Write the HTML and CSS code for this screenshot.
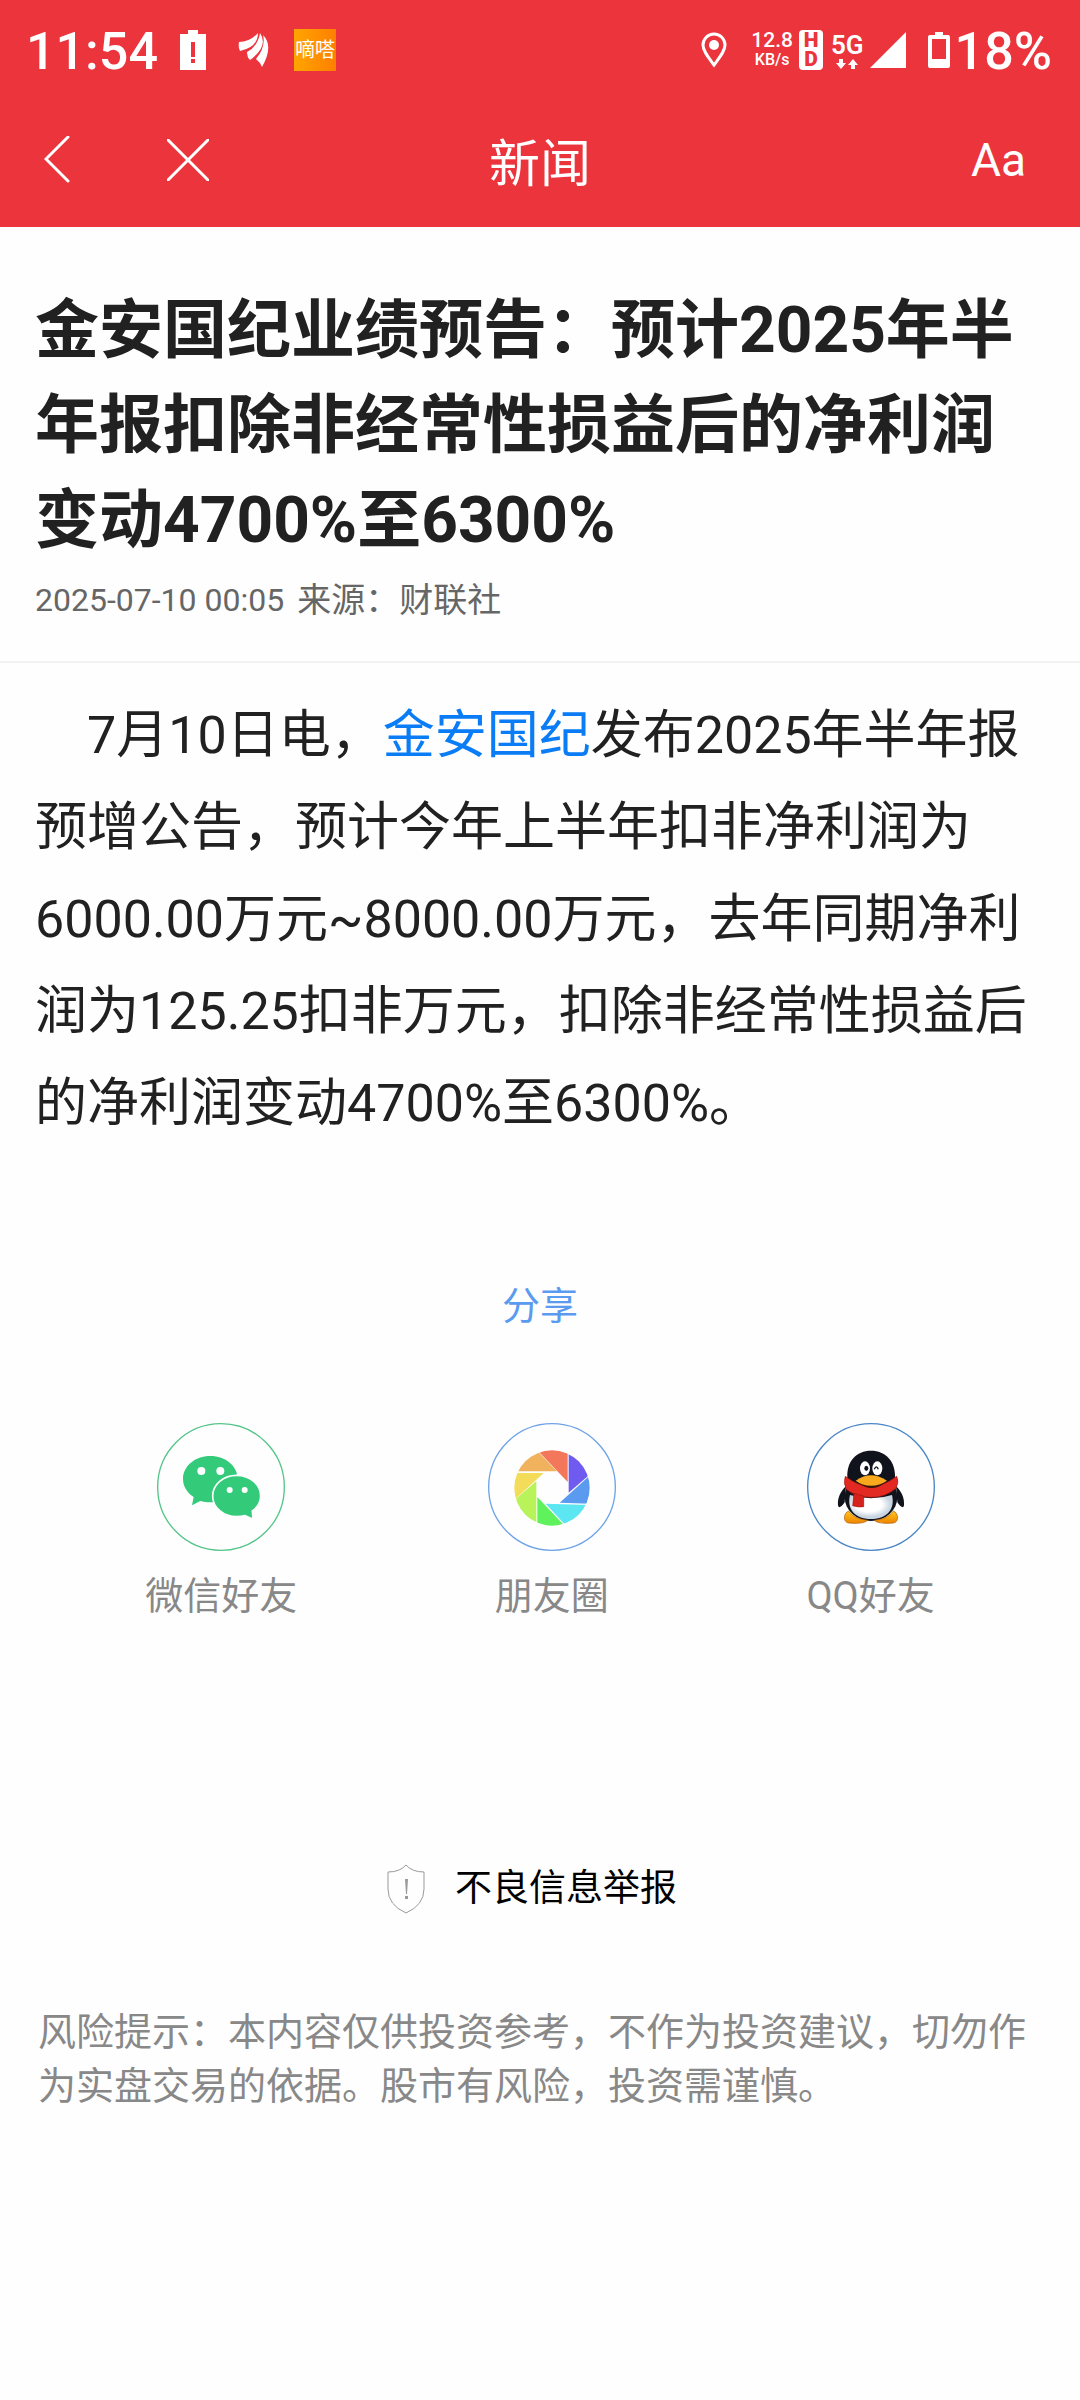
FILE: index.html
```html
<!DOCTYPE html>
<html lang="zh-CN">
<head>
    <meta charset="UTF-8">
    <meta name="viewport" content="width=device-width, initial-scale=1.0">
    <title>新闻</title>
    <link rel="stylesheet" href="styles.css">
</head>
<body>
    <header class="top">
        <div class="status-bar">
            <div class="status-left">
                <span class="status-text">11:54</span>
                <svg class="icon-alert" width="26" height="40" viewBox="0 0 26 40">
                    <path fill="#fff" fill-rule="evenodd" d="M8 0h10v4h8v36H0V4h8zM11 12v15h4V12zM11 29v4h4v-4z"/>
                </svg>
                <svg class="icon-wing" width="32" height="36" viewBox="0 0 32 36">
                    <path fill="#fff" d="M1 10Q12 10 20 1Q20 15 2 19Q0 15 1 10zM9 20Q20 14 22 1Q31 14 12 28Q9 25 9 20zM18 27Q28 15 25 3Q36 14 24 35Q22 30 18 27z"/>
                </svg>
                <span class="app-badge">嘀嗒</span>
            </div>
            <div class="status-right">
                <svg class="icon-pin" width="26" height="36" viewBox="0 0 26 36">
                    <path fill="none" stroke="#fff" stroke-width="3" d="M13 33C7 25 2 19 2 13a11 11 0 0 1 22 0c0 6-5 12-11 20z"/>
                    <circle cx="13" cy="13" r="5" fill="#fff"/>
                </svg>
                <div class="speed">
                    <span>12.8</span>
                    <small>KB/s</small>
                </div>
                <div class="hd"><span>H</span><span>D</span></div>
                <div class="network">
                    <span>5G</span>
                    <svg width="22" height="10" viewBox="0 0 22 10">
                        <path fill="#fff" d="M3 0h4v4h3L5 10 0 4h3zM15 10h4V6h3l-5-6-5 6h3z"/>
                    </svg>
                </div>
                <svg class="icon-signal" width="36" height="36" viewBox="0 0 36 36">
                    <path fill="#fff" d="M0 36L36 0v36z"/>
                </svg>
                <svg class="icon-battery" width="22" height="36" viewBox="0 0 22 36">
                    <path fill="#fff" fill-rule="evenodd" d="M7 0h8v3h5q2 0 2 2v29q0 2-2 2H2q-2 0-2-2V5q0-2 2-2h5zM4 7v20h14V7z"/>
                </svg>
                <span class="status-text">18%</span>
            </div>
        </div>
        <nav class="nav-bar">
            <div class="nav-left">
                <button class="nav-button" aria-label="返回">
                    <svg width="26" height="48" viewBox="0 0 26 48">
                        <path d="M24 1L2 23l22 22"/>
                    </svg>
                </button>
                <button class="nav-button" aria-label="关闭">
                    <svg width="42" height="42" viewBox="0 0 42 42">
                        <path d="M1 1l40 40M41 1L1 41"/>
                    </svg>
                </button>
            </div>
            <span class="nav-title">新闻</span>
            <button class="nav-button font-button">Aa</button>
        </nav>
    </header>

    <main>
        <div class="article-head">
            <h1>金安国纪业绩预告：预计2025年半年报扣除非经常性损益后的净利润变动4700%至6300%</h1>
            <p class="meta"><time>2025-07-10 00:05</time><span>来源：财联社</span></p>
        </div>
        <p class="article-body">7月10日电，<a href="#">金安国纪</a>发布2025年半年报预增公告，预计今年上半年扣非净利润为6000.00万元~8000.00万元，去年同期净利润为125.25扣非万元，扣除非经常性损益后的净利润变动4700%至6300%。</p>

        <section class="share">
            <h2>分享</h2>
            <div class="share-list">
                <button class="share-item">
                    <svg width="128" height="128" viewBox="57 68 384 384">
                        <circle cx="249" cy="260" r="190" fill="none" stroke="#55c58a" stroke-width="4"/>
                        <path fill="#33cb7a" d="M217 167c46 0 82 30 82 69 0 38-36 70-82 70-11 0-21-2-30-4l-25 13 5-25c-20-13-32-32-32-54 0-39 36-69 82-69z"/>
                        <path fill="#33cb7a" stroke="#fff" stroke-width="5" d="M296 225c40 0 72 27 72 62 0 19-10 34-25 45l2 25-24-11c-8 2-16 3-25 3-40 0-72-27-72-62s32-62 72-62z"/>
                        <g fill="#fff">
                            <circle cx="190" cy="212" r="12"/>
                            <circle cx="247" cy="212" r="12"/>
                            <circle cx="275" cy="269" r="9"/>
                            <circle cx="320" cy="269" r="9"/>
                        </g>
                    </svg>
                    <span>微信好友</span>
                </button>
                <button class="share-item">
                    <svg width="128" height="128" viewBox="81 488 384 384">
                        <clipPath id="lens"><circle cx="273" cy="683" r="113"/></clipPath>
                        <circle cx="273" cy="680" r="190" fill="none" stroke="#6fa3e8" stroke-width="4"/>
                        <g clip-path="url(#lens)">
                            <path fill="#f2775b" d="M220 560h100v105z"/>
                            <path fill="#f0b25c" d="M232 575l56 58H140v-70z"/>
                            <path fill="#f2dc5a" d="M150 638h98l-98 90z"/>
                            <path fill="#b9f35a" d="M150 728l76-66v140h-76z"/>
                            <path fill="#60f25c" d="M229 710l90 95h-90z"/>
                            <path fill="#5be6f2" d="M254 730l146 4v70h-78z"/>
                            <path fill="#5b9bef" d="M296 727l104-94v98z"/>
                            <path fill="#6f5bef" d="M323 560v137l80-69z"/>
                        </g>
                    </svg>
                    <span>朋友圈</span>
                </button>
                <button class="share-item">
                    <svg width="128" height="128" viewBox="75 68 384 384">
                        <defs>
                            <radialGradient id="belly" cx="45%" cy="40%">
                                <stop offset="60%" stop-color="#fff"/>
                                <stop offset="100%" stop-color="#c9d6e2"/>
                            </radialGradient>
                            <linearGradient id="feet" x2="0" y2="1">
                                <stop offset="0" stop-color="#ffc51e"/>
                                <stop offset="1" stop-color="#ee8400"/>
                            </linearGradient>
                        </defs>
                        <circle cx="267" cy="260" r="190" fill="none" stroke="#4a86c8" stroke-width="4"/>
                        <path fill="#11131c" d="M192 258c-16 14-26 36-24 56 1 10 8 9 20-8zM342 258c16 14 26 36 24 56-1 10-8 9-20-8z"/>
                        <ellipse cx="267" cy="290" rx="79" ry="72" fill="#11131c"/>
                        <path fill="url(#belly)" d="M204 284q63 20 126 0c10 42-14 72-63 72s-73-30-63-72z"/>
                        <path fill="url(#feet)" stroke="#a85a05" stroke-width="2" d="M200 332c-16 6-18 34 0 36 20 2 46 2 57-8-26-4-42-8-57-28zM334 332c16 6 18 34 0 36-20 2-46 2-57-8 26-4 42-8 57-28z"/>
                        <path fill="#11131c" d="M267 151c44 0 74 32 72 82-30 34-114 34-143 0-3-50 27-82 71-82z"/>
                        <path fill="#e32a22" stroke="#a3130f" stroke-width="2" d="M190 228q76 60 154 0 8 16-2 36-33 28-75 27-45-1-74-24-10-20-3-39z"/>
                        <path fill="#d6221c" stroke="#a3130f" stroke-width="2" d="M216 279l29 8v32q-16 3-33-3z"/>
                        <ellipse cx="249" cy="204" rx="15" ry="21" fill="#fff"/>
                        <ellipse cx="286" cy="204" rx="15" ry="21" fill="#fff"/>
                        <ellipse cx="253" cy="204" rx="6" ry="8" fill="#11131c"/>
                        <path fill="none" stroke="#11131c" stroke-width="4" d="M277 207q6-15 12 0"/>
                        <path fill="#3a1708" d="M226 244q43 38 86 0-43 24-86 0z"/>
                        <path fill="#f9a91d" d="M221 241q24-16 46-16t48 16q-22 15-48 15t-46-15z"/>
                    </svg>
                    <span>QQ好友</span>
                </button>
            </div>
        </section>

        <a class="report" href="#">
            <svg width="38" height="50" viewBox="0 0 38 50">
                <path fill="none" stroke="#999" d="M19 1q6 7 18 7v17q0 16-18 24Q1 41 1 25V8q12 0 18-7z"/>
                <path fill="#999" d="M18 15h3l-1 15h-1zM18 32h3v3h-3z"/>
            </svg>
            <span>不良信息举报</span>
        </a>

        <p class="disclaimer">风险提示：本内容仅供投资参考，不作为投资建议，切勿作为实盘交易的依据。股市有风险，投资需谨慎。</p>
    </main>
</body>
</html>
```
FILE: styles.css
```css
* {
    box-sizing: border-box;
}

body {
    margin: 0;
    background: #fefefe;
    color: #212121;
    font-family: Roboto, "Noto Sans CJK SC", sans-serif;
}

h1, h2, p {
    margin: 0;
}

svg {
    display: block;
    flex-shrink: 0;
}

button {
    border: none;
    padding: 0;
    background: none;
    font-family: inherit;
    cursor: pointer;
}

a {
    color: #0a7cf5;
    text-decoration: none;
}

/* Header */
.top {
    background: #eb343c;
    color: white;
}

.status-bar {
    display: flex;
    justify-content: space-between;
    height: 100px;
    padding: 0 28px 0 26px;
}

.status-left,
.status-right {
    display: flex;
    align-items: center;
}

.status-text {
    font-size: 52px;
    font-weight: 500;
    line-height: 60px;
    padding-top: 4px;
}

.icon-alert {
    margin-left: 22px;
}

.icon-wing {
    margin-left: 32px;
}

.app-badge {
    width: 42px;
    height: 42px;
    margin-left: 24px;
    background: linear-gradient(to right, #ffa500, #ff7f00);
    font-size: 20px;
    line-height: 42px;
    text-align: center;
}

.speed {
    display: flex;
    flex-direction: column;
    align-items: center;
    margin-left: 24px;
    font-size: 21px;
    font-weight: 500;
    line-height: 20px;
}

.speed small {
    font-size: 16px;
}

.hd {
    display: flex;
    flex-direction: column;
    align-items: center;
    width: 24px;
    height: 40px;
    margin-left: 6px;
    padding-top: 1px;
    border-radius: 4px;
    background: white;
    color: #eb343c;
    font-size: 21px;
    font-weight: 900;
    line-height: 19px;
}

.network {
    display: flex;
    flex-direction: column;
    align-items: center;
    margin-left: 8px;
    font-size: 26px;
    font-weight: 600;
    line-height: 28px;
}

.icon-signal {
    margin-left: 6px;
}

.icon-battery {
    margin-left: 22px;
}

.icon-battery + .status-text {
    margin-left: 5px;
}

.nav-bar {
    display: grid;
    grid-template-columns: 1fr auto 1fr;
    align-items: center;
    height: 127px;
    padding: 0 54px 8px;
}

.nav-left {
    display: flex;
    align-items: center;
    gap: 97px;
    margin-left: -10px;
}

.nav-button {
    color: white;
}

.nav-button path {
    fill: none;
    stroke: white;
    stroke-width: 3;
    stroke-linecap: round;
}

.nav-title {
    font-size: 51px;
    line-height: 60px;
    padding-top: 10px;
}

.font-button {
    justify-self: end;
    font-size: 46px;
    font-weight: 400;
}

/* Article */
.article-head {
    padding: 56px 35px 38px;
    border-bottom: 2px solid #f2f2f2;
}

h1 {
    font-size: 64px;
    font-weight: 700;
    line-height: 95px;
}

.meta {
    display: flex;
    align-items: center;
    gap: 13px;
    margin-top: 9px;
    color: #666;
    font-size: 34px;
    line-height: 46px;
}

.meta time {
    font-size: 32px;
}

.article-body {
    padding: 27px 35px 0;
    font-size: 52px;
    line-height: 92px;
    text-indent: 1em;
}

/* Share */
.share {
    padding-top: 129px;
}

.share h2 {
    color: #5b9bef;
    font-size: 38px;
    font-weight: 400;
    line-height: 54px;
    text-align: center;
}

.share-list {
    display: flex;
    justify-content: space-around;
    margin-top: 90px;
    padding: 0 50px;
}

.share-item {
    display: flex;
    flex-direction: column;
    align-items: center;
    gap: 18px;
    color: #888;
    font-size: 38px;
    line-height: 54px;
}

.report {
    display: flex;
    justify-content: center;
    align-items: center;
    gap: 30px;
    margin-top: 239px;
    padding-right: 16px;
    color: black;
    font-size: 37px;
    line-height: 54px;
}

.disclaimer {
    padding: 89px 38px;
    color: #888;
    font-size: 38px;
    line-height: 54px;
}
```
